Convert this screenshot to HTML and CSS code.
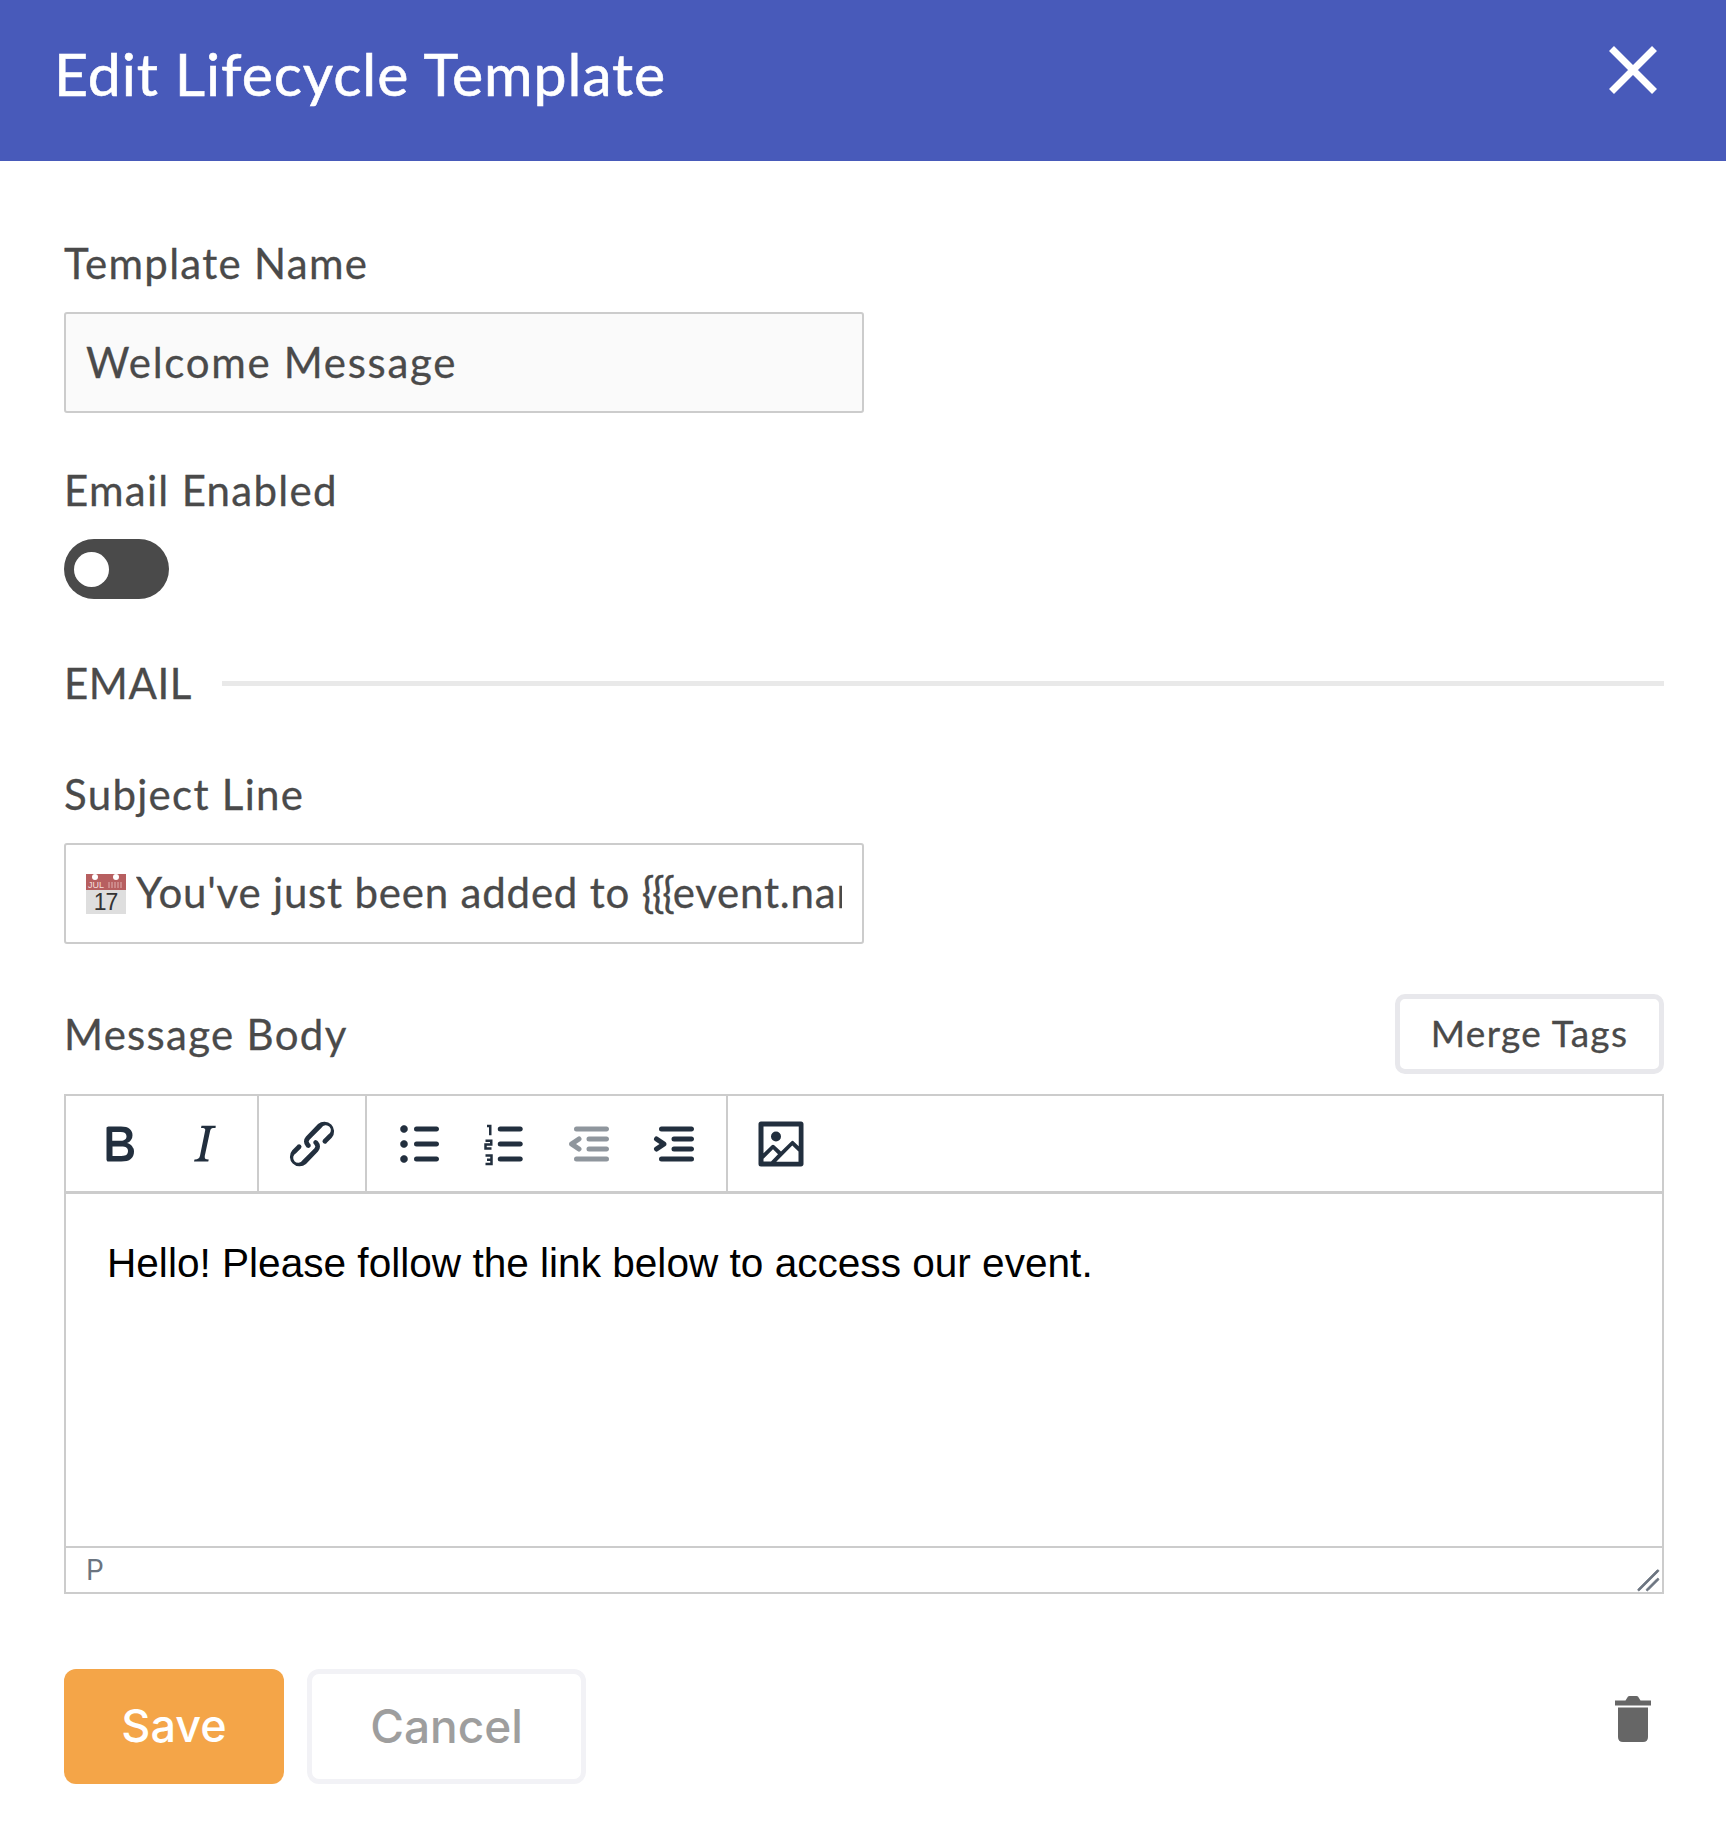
FILE: index.html
```html
<!DOCTYPE html>
<html lang="en">
<head>
<meta charset="utf-8">
<title>Edit Lifecycle Template</title>
<link rel="stylesheet" href="styles.css">
</head>
<body>
<header class="modal-header">
  <h1 class="modal-title">Edit Lifecycle Template</h1>
  <button class="close-btn" aria-label="Close">
    <svg viewBox="0 0 48 48" width="48" height="48"><path d="M2.500 2.500L45.500 45.500M45.500 2.500L2.500 45.500" fill="none" stroke="#fff" stroke-width="7"/></svg>
  </button>
</header>
<main class="modal-body">
  <label class="label label-name">Template Name</label>
  <input class="text-input disabled" value="Welcome Message" readonly>

  <label class="label label-enabled">Email Enabled</label>
  <div class="toggle"><span class="knob"></span></div>

  <div class="section-head">
    <span class="label label-section">EMAIL</span>
    <span class="section-rule"></span>
  </div>

  <label class="label label-subject">Subject Line</label>
  <div class="text-input subject">
    <svg class="cal" viewBox="0 0 40 40" width="40" height="40">
      <rect y="0" width="40" height="40" fill="#dedede"/>
      <rect y="0" width="40" height="16" fill="#b75f60"/>
      <circle cx="9" cy="3" r="3" fill="#fff"/>
      <circle cx="30" cy="3" r="3" fill="#fff"/>
      <text x="2" y="13.500" class="cal-month">JUL</text>
      <path d="M23 8v6M26 8v6M29 8v6M32 8v6M35 8v6" stroke="#d9a3a3" stroke-width="1.200"/>
      <text x="19.500" y="36" class="cal-day">17</text>
    </svg>
    <span class="subject-text">You've just been added to <span class="braces">{{{</span>event.name}}}</span>
  </div>

  <div class="body-head">
    <span class="label">Message Body</span>
    <button class="merge-btn">Merge Tags</button>
  </div>

  <section class="editor">
    <div class="toolbar">
      <div class="tool-group">
        <span class="tool"><svg viewBox="0 0 24 24"><path d="M7.8 19c-.3 0-.5 0-.6-.2l-.2-.5V5.7c0-.2 0-.4.2-.5l.6-.2h5c1.5 0 2.7.3 3.5 1 .7.6 1.1 1.4 1.1 2.5a3 3 0 0 1-.6 1.9c-.4.6-1 1-1.6 1.2.4.1.9.3 1.3.6s.8.7 1 1.2c.4.4.5 1 .5 1.6 0 1.3-.4 2.3-1.3 3-.8.7-2.1 1-3.8 1H7.8zm5-8.3c.6 0 1.2-.1 1.6-.5.4-.3.6-.7.6-1.3 0-1.1-.8-1.7-2.3-1.7H9.3v3.5h3.4zm.5 6c.7 0 1.3-.1 1.7-.4.4-.4.6-.9.6-1.5s-.2-1-.7-1.4c-.4-.3-1-.4-2-.4H9.4v3.8h4z"/></svg></span>
        <span class="tool"><svg viewBox="0 0 24 24"><path d="M16.7 4.7l-.1.9h-.3c-.6 0-1 0-1.4.3-.3.3-.4.6-.5 1.1l-2.1 9.8v.6c0 .5.4.8 1.4.8h.2l-.2.8H8l.2-.8h.2c1.1 0 1.8-.5 2-1.5l2-9.8.1-.5c0-.6-.4-.8-1.4-.8h-.3l.2-.9h5.8z"/></svg></span>
      </div>
      <div class="tool-group">
        <span class="tool"><svg viewBox="0 0 24 24"><path d="M6.2 12.3a1 1 0 0 1 1.4 1.4l-2 2a2 2 0 1 0 2.6 2.8l4.8-4.8a1 1 0 0 0 0-1.4 1 1 0 1 1 1.4-1.3 2.9 2.9 0 0 1 0 4L9.6 20a3.9 3.9 0 0 1-5.5-5.5l2-2zm11.6-.6a1 1 0 0 1-1.4-1.4l2-2a2 2 0 1 0-2.6-2.8L11 10.3a1 1 0 0 0 0 1.4A1 1 0 1 1 9.6 13a2.9 2.9 0 0 1 0-4L14.4 4a3.9 3.9 0 0 1 5.5 5.5l-2 2z"/></svg></span>
      </div>
      <div class="tool-group group-lists">
        <span class="tool"><svg viewBox="0 0 24 24"><path d="M11 5h8c.6 0 1 .4 1 1s-.4 1-1 1h-8a1 1 0 0 1 0-2zm0 6h8c.6 0 1 .4 1 1s-.4 1-1 1h-8a1 1 0 0 1 0-2zm0 6h8c.6 0 1 .4 1 1s-.4 1-1 1h-8a1 1 0 0 1 0-2zM4.500 6c0-.4.1-.8.4-1 .3-.4.7-.5 1.100-.5.4 0 .8.1 1 .4.4.3.5.7.5 1.100 0 .4-.1.8-.4 1-.3.4-.7.5-1.100.5-.4 0-.8-.1-1-.4-.4-.3-.5-.7-.5-1.100zm0 6c0-.4.1-.8.4-1 .3-.4.7-.5 1.100-.5.4 0 .8.1 1 .4.4.3.5.7.5 1.100 0 .4-.1.8-.4 1-.3.4-.7.5-1.100.5-.4 0-.8-.1-1-.4-.4-.3-.5-.7-.5-1.100zm0 6c0-.4.1-.8.4-1 .3-.4.7-.5 1.100-.5.4 0 .8.1 1 .4.4.3.5.7.5 1.100 0 .4-.1.8-.4 1-.3.4-.7.5-1.100.5-.4 0-.8-.1-1-.4-.4-.3-.5-.7-.5-1.100z"/></svg></span>
        <span class="tool"><svg viewBox="0 0 24 24"><path d="M10.500 17h8c.6 0 1 .4 1 1s-.4 1-1 1h-8a1 1 0 0 1 0-2zm0-6h8c.6 0 1 .4 1 1s-.4 1-1 1h-8a1 1 0 0 1 0-2zm0-6h8c.6 0 1 .4 1 1s-.4 1-1 1h-8a1 1 0 1 1 0-2z"/><path class="num" d="M5.200 4.800h1.300v3.700M4.600 10.700h2.300v1.500h-2.300v1.600h2.400M4.600 16.600h2.400v3.400h-2.400M5.200 18.300h1.800"/></svg></span>
        <span class="tool disabled-tool"><svg viewBox="0 0 24 24"><path d="M7 5h12c.6 0 1 .4 1 1s-.4 1-1 1H7a1 1 0 1 1 0-2zm5 4h7c.6 0 1 .4 1 1s-.4 1-1 1h-7a1 1 0 0 1 0-2zm0 4h7c.6 0 1 .4 1 1s-.4 1-1 1h-7a1 1 0 0 1 0-2zm-5 4h12a1 1 0 0 1 0 2H7a1 1 0 0 1 0-2zm1.600-3.800a1 1 0 0 1-1.200 1.600l-3-2a1 1 0 0 1 0-1.600l3-2a1 1 0 0 1 1.200 1.600L6.800 12l1.800 1.200z"/></svg></span>
        <span class="tool"><svg viewBox="0 0 24 24"><path d="M7 5h12c.6 0 1 .4 1 1s-.4 1-1 1H7a1 1 0 1 1 0-2zm5 4h7c.6 0 1 .4 1 1s-.4 1-1 1h-7a1 1 0 0 1 0-2zm0 4h7c.6 0 1 .4 1 1s-.4 1-1 1h-7a1 1 0 0 1 0-2zm-5 4h12a1 1 0 0 1 0 2H7a1 1 0 0 1 0-2zm-2.600-3.800L6.200 12l-1.800-1.200a1 1 0 0 1 1.200-1.600l3 2a1 1 0 0 1 0 1.600l-3 2a1 1 0 1 1-1.200-1.600z"/></svg></span>
      </div>
      <div class="tool-group last">
        <span class="tool"><svg viewBox="0 0 24 24"><path d="M5 15.700l3.300-3.200c.3-.3.7-.3 1 0L12 15l4.100-4c.3-.4.8-.4 1 0l2 1.900V5H5v10.700zM5 18V19h3l2.800-2.900-2-2L5 17.900zm14-3l-2.500-2.400-6.400 6.500H19v-4zM4 3h16c.6 0 1 .4 1 1v16c0 .6-.4 1-1 1H4a1 1 0 0 1-1-1V4c0-.6.4-1 1-1zm6 8a2 2 0 1 0 0-4 2 2 0 0 0 0 4z"/></svg></span>
      </div>
    </div>
    <div class="editor-content">
      <p class="editor-text">Hello! Please follow the link below to access our event.</p>
    </div>
    <div class="statusbar">
      <span class="path">P</span>
      <svg class="grip" viewBox="0 0 16 16" width="34" height="34"><path d="M14.650 5.650l-9 9a.5.5 0 0 0 .7.7l9-9a.5.5 0 0 0-.7-.7zm0 4l-5 5a.5.5 0 0 0 .7.7l5-5a.5.5 0 0 0-.7-.7z"/></svg>
    </div>
  </section>

  <footer class="actions">
    <button class="btn btn-save">Save</button>
    <button class="btn btn-cancel">Cancel</button>
    <svg class="trash" viewBox="0 0 36 46" width="36" height="46"><path d="M0 4.500h10.500L13 0.500Q13.500 0 14.500 0h7q1 0 1.500.5L25.500 4.500H36V9.500H0zM3 11.500h30V41q0 5-5 5H8q-5 0-5-5z" fill="#666"/></svg>
  </footer>
</main>
</body>
</html>
```

FILE: styles.css
```css
* { box-sizing: border-box; }
html, body { margin: 0; padding: 0; background: #fff; }
body { font-family: Lato, "Liberation Sans", sans-serif; color: #4a4a4a; }

.modal-header {
  height: 161px;
  background: #485aba;
  display: flex;
  align-items: center;
  justify-content: space-between;
  padding: 0 69px 12px 54px;
}
.modal-title {
  margin: 0 0 2px;
  font-size: 59px;
  line-height: 70px;
  font-weight: 400;
  letter-spacing: 0.9px;
  color: #fff;
  -webkit-text-stroke: 0.6px #fff;
}
.close-btn {
  display: flex;
  padding: 0;
  border: 0;
  background: none;
  margin-bottom: 10px;
}

.modal-body {
  padding: 78px 62px 0 64px;
  display: flex;
  flex-direction: column;
}
.label {
  display: block;
  font-size: 42px;
  line-height: 48px;
  letter-spacing: 1.300px;
  color: #4a4a4a;
  -webkit-text-stroke: 0.3px #4a4a4a;
}
.label-section { letter-spacing: 0.6px; }
.label-name, .label-subject { margin-bottom: 25px; }
.label-enabled { margin-top: 53px; margin-bottom: 25px; }

.text-input {
  width: 800px;
  height: 101px;
  border: 2px solid #ccc;
  border-radius: 3px;
  padding: 0 20px 2px;
  font-family: inherit;
  font-size: 42px;
  letter-spacing: 1.700px;
  color: #4a4a4a;
  background: #fff;
  outline: none;
  -webkit-text-stroke: 0.3px #4a4a4a;
}
.text-input.disabled { background: #fafafa; }
.subject { display: flex; align-items: center; gap: 10px; letter-spacing: 0.8px; padding-bottom: 0; }
.cal { flex: none; }
.cal-month { font: 400 9px "Liberation Sans", sans-serif; letter-spacing: 0; fill: #f3dede; stroke: none; -webkit-text-stroke: 0; }
.cal-day { font: 400 23px "Liberation Sans", sans-serif; letter-spacing: -1px; fill: #333; text-anchor: middle; stroke: none; -webkit-text-stroke: 0; }
.subject-text { flex: 1; min-width: 0; overflow: hidden; white-space: nowrap; padding-bottom: 4px; }
.braces { letter-spacing: -2.300px; }

.toggle {
  width: 105px;
  height: 60px;
  border-radius: 30px;
  background: #4a4a4a;
  display: flex;
  align-items: center;
  padding-left: 10px;
}
.knob { width: 35px; height: 35px; border-radius: 50%; background: #fff; }

.section-head {
  display: flex;
  align-items: center;
  gap: 30px;
  margin-top: 60px;
}
.section-rule { flex: 1; height: 5px; background: #e9e9e9; }
.label-subject { margin-top: 63px; }

.body-head {
  display: flex;
  align-items: center;
  justify-content: space-between;
  margin-top: 50px;
  margin-bottom: 20px;
}
.merge-btn {
  width: 269px;
  height: 80px;
  border: 5px solid #e8e8ec;
  border-radius: 10px;
  background: #fff;
  font-family: inherit;
  font-size: 37px;
  letter-spacing: 1.300px;
  color: #4a4a4a;
  padding: 0 0 3px;
  -webkit-text-stroke: 0.3px #4a4a4a;
}

.editor {
  width: 1600px;
  height: 500px;
  border: 2px solid #ccc;
  display: flex;
  flex-direction: column;
}
.toolbar {
  height: 98px;
  flex: none;
  display: flex;
  border-bottom: 3px solid #ccc;
}
.tool-group {
  display: flex;
  padding: 0 11px 0 10px;
  border-right: 2px solid #ccc;
}
.tool-group.group-lists { padding: 0 10px 0 9px; }
.tool-group.last { border-right: 0; }
.tool {
  width: 85px;
  display: flex;
  align-items: center;
  justify-content: center;
}
.tool svg { width: 60px; height: 60px; fill: #222f3e; }
.tool .num { fill: none; stroke: #222f3e; stroke-width: 1; }
.disabled-tool svg { opacity: .5; }

.editor-content { flex: 1; padding: 0 35px 0 41px; }
.editor-text {
  margin: 46px 0 0;
  font-family: "Liberation Sans", Arial, sans-serif;
  font-size: 40.6px;
  line-height: 46px;
  color: #000;
}
.statusbar {
  height: 46px;
  flex: none;
  display: flex;
  align-items: center;
  justify-content: space-between;
  border-top: 2px solid #ccc;
  padding: 0 2px 0 20px;
}
.path {
  font-family: Inter, "Liberation Sans", sans-serif;
  font-size: 28px;
  color: #6b7480;
}
.grip { fill: #6b7480; stroke: #6b7480; stroke-width: .4; align-self: flex-end; }

.actions {
  display: flex;
  align-items: flex-start;
  gap: 23px;
  margin-top: 75px;
}
.btn {
  height: 115px;
  border-radius: 12px;
  font-family: Inter, "Liberation Sans", sans-serif;
  font-size: 46px;
  font-weight: 500;
  padding: 0 0 2px;
}
.btn-save { width: 220px; background: #f4a548; border: 0; color: #fff; font-size: 45px; }
.btn-cancel { width: 279px; background: #fff; border: 5px solid #f2f2f6; color: #9e9e9e; }
.trash { margin-left: auto; margin-top: 27px; margin-right: 13px; }
```
